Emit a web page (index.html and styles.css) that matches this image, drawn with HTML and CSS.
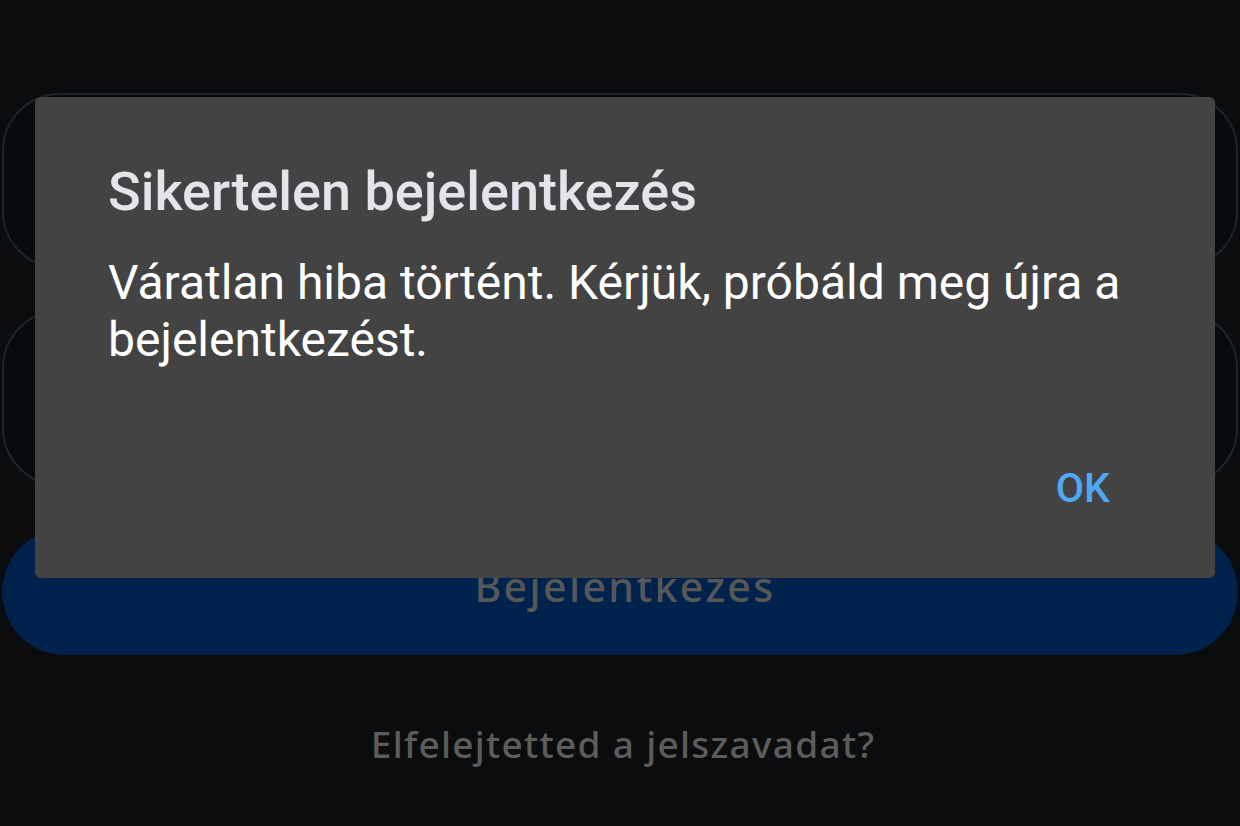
FILE: index.html
```html
<!DOCTYPE html>
<html lang="hu">
<head>
<meta charset="utf-8">
<title>Bejelentkezés</title>
<link rel="stylesheet" href="styles.css">
</head>
<body>
<div class="screen">
  <div class="form">
    <div class="field"></div>
    <div class="field"></div>
    <div class="login-btn">Bejelentkezés</div>
    <div class="forgot">Elfelejtetted a jelszavadat?</div>
  </div>
  <div class="dialog">
    <div class="dialog-title">Sikertelen bejelentkezés</div>
    <div class="dialog-msg">Váratlan hiba történt. Kérjük, próbáld meg újra a bejelentkezést.</div>
    <div class="dialog-actions"><span class="dialog-ok">OK</span></div>
  </div>
</div>
</body>
</html>
```

FILE: styles.css
```css
html, body {
  margin: 0;
  padding: 0;
  background: #0b0c0e;
}
.screen {
  position: relative;
  width: 1240px;
  height: 826px;
  overflow: hidden;
  background: #0b0c0e;
}
.form {
  display: flex;
  flex-direction: column;
  padding: 93px 2px 0 2px;
}
.field {
  box-sizing: border-box;
  height: 176px;
  border: 2px solid #1c242c;
  border-radius: 58px;
  background: #070b0e;
}
.field + .field {
  margin-top: 41px;
}
.login-btn {
  margin-top: 43px;
  height: 126px;
  border-radius: 63px;
  background: #00234d;
  display: flex;
  align-items: center;
  justify-content: center;
  color: #575757;
  font-family: "Noto Sans", "Open Sans", sans-serif;
  font-weight: 500;
  font-size: 41px;
  letter-spacing: 2.4px;
  padding: 0 0 12px 10px;
  box-sizing: border-box;
}
.forgot {
  margin-top: 64px;
  height: 50px;
  line-height: 50px;
  text-align: center;
  color: #5c5c5c;
  font-family: "Noto Sans", "Open Sans", sans-serif;
  font-weight: 500;
  font-size: 37px;
  letter-spacing: 1.3px;
  padding-left: 6px;
}
.dialog {
  position: absolute;
  left: 35px;
  top: 97px;
  width: 1180px;
  height: 481px;
  box-sizing: border-box;
  background: #434343;
  border-radius: 6px;
  padding: 62.5px 60px 0 73px;
  font-family: Roboto, "Liberation Sans", sans-serif;
}
.dialog-title {
  font-size: 54px;
  line-height: 64px;
  font-weight: 500;
  color: #e3e5ea;
}
.dialog-msg {
  margin-top: 30.5px;
  font-size: 48px;
  line-height: 57px;
  color: #ffffff;
}
.dialog-actions {
  margin-top: 95.5px;
  margin-right: 45px;
  display: flex;
  justify-content: flex-end;
}
.dialog-ok {
  font-size: 41px;
  line-height: 48px;
  font-weight: 500;
  color: #4ea8f5;
}
```
